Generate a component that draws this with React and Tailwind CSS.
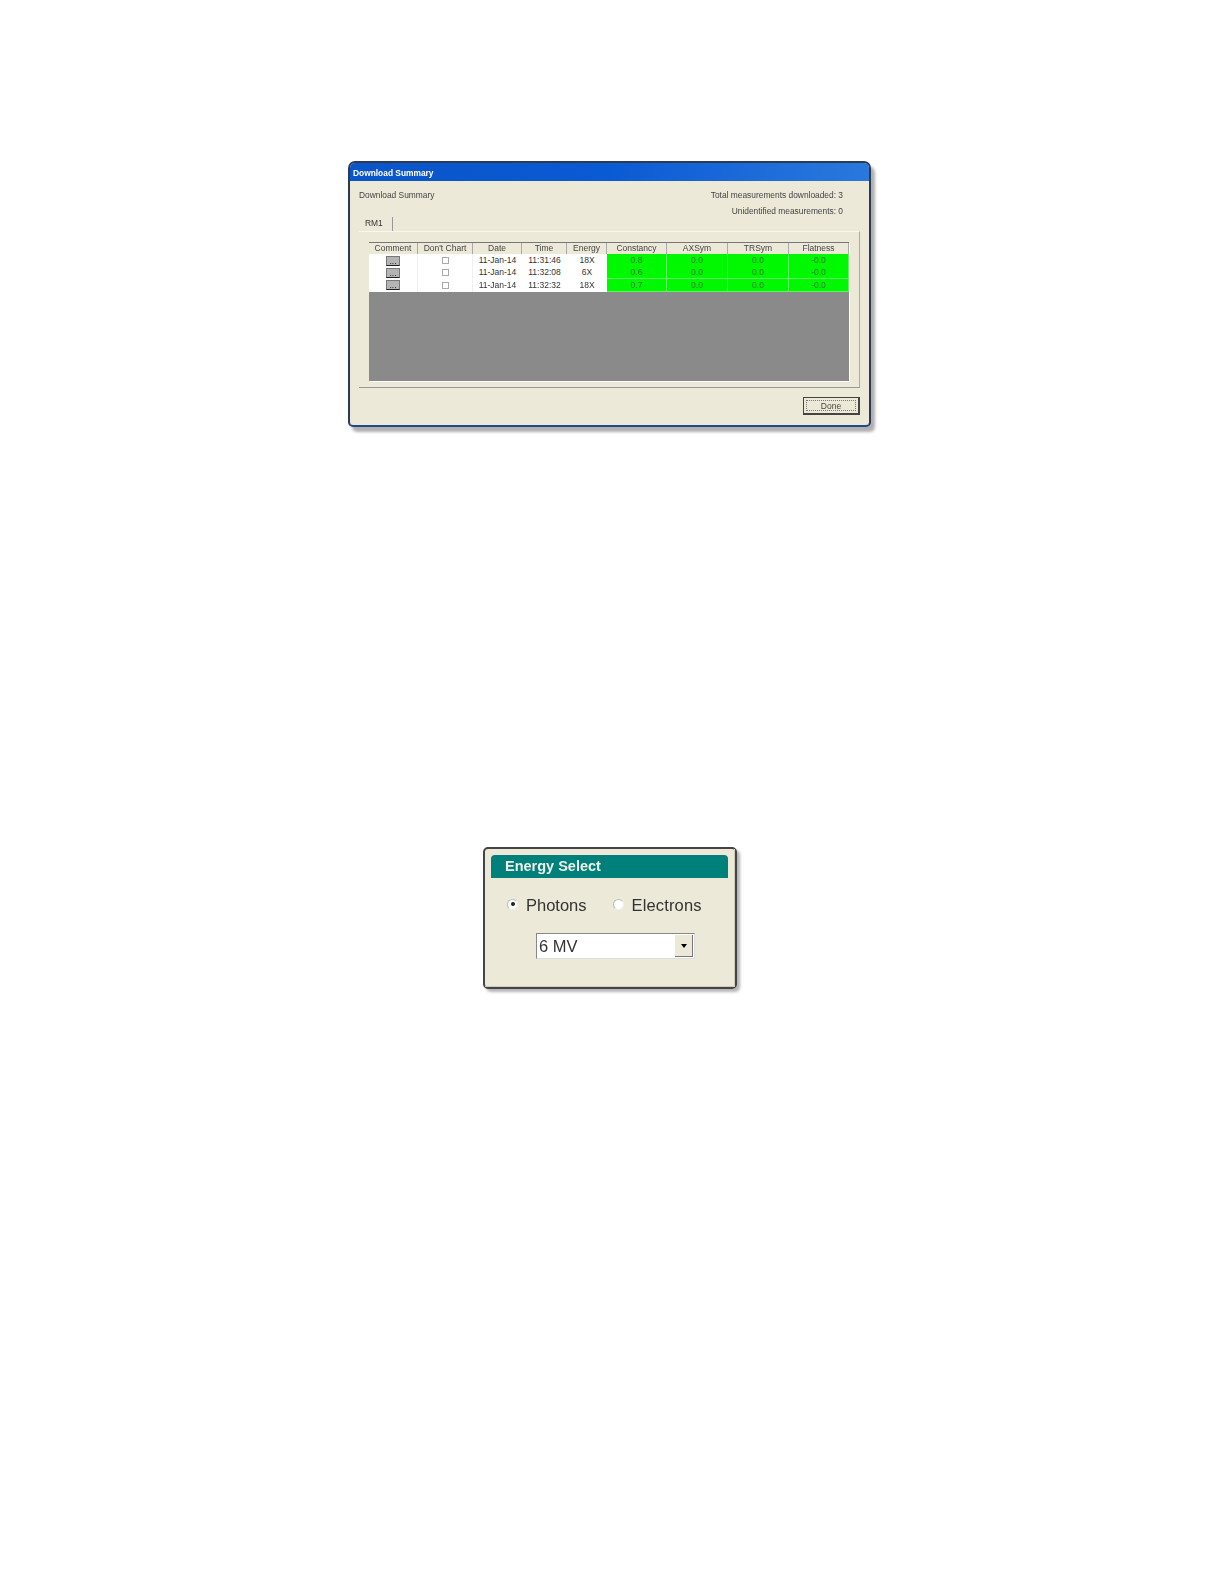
import React from 'react';

const cols = 'grid grid-cols-[49px_55px_49px_45px_40px_60px_61px_61px_60px]';

const headers = ['Comment', "Don't Chart", 'Date', 'Time', 'Energy', 'Constancy', 'AXSym', 'TRSym', 'Flatness'];

const rows = [
  { time: '11:31:46', energy: '18X', constancy: '0.8' },
  { time: '11:32:08', energy: '6X', constancy: '0.6' },
  { time: '11:32:32', energy: '18X', constancy: '0.7' },
];

const Row = ({ row }) => (
  <div className={`${cols} h-[12.33px] text-[8.5px] leading-3 text-[#333]`}>
    <div className="flex items-center justify-center border-r border-[#f0f0f0] bg-white">
      <div className="h-[10px] w-[14px] overflow-hidden border border-[#777] border-b-[#222] bg-[#b4b4b4] text-center text-[8.5px] leading-[9px] text-[#222]">...</div>
    </div>
    <div className="flex items-center justify-center border-r border-[#f0f0f0] bg-white">
      <div className="h-[7px] w-[7px] border border-[#aaa] bg-white" />
    </div>
    <div className="bg-white text-center">11-Jan-14</div>
    <div className="bg-white text-center">{row.time}</div>
    <div className="bg-white text-center">{row.energy}</div>
    {[row.constancy, '0.0', '0.0', '-0.0'].map((v, i) => (
      <div key={i} className="border-b border-r border-[#66f066] bg-[#00f800] text-center text-[#2a7a2a]">{v}</div>
    ))}
  </div>
);

const DownloadSummary = () => (
  <div className="ml-[348px] h-[266px] w-[523px] overflow-hidden rounded-t-[7px] rounded-b-[5px] border-2 border-[#2b3a55] border-b-[#1d4a8c] bg-[#ece9d8] shadow-[4px_5px_3px_#b0b0b0] blur-[0.3px]">
    <div className="h-[18px] bg-gradient-to-r from-[#0a55c8] via-[#0a5ad4] to-[#2a78dc] pl-[3px] text-[8.4px] font-bold leading-[20px] text-white">
      Download Summary
    </div>
    <div className="px-[9px] pt-2 text-[8.4px] text-[#444]">
      <div className="flex justify-between pr-[17px] leading-3">
        <span>Download Summary</span>
        <span>Total measurements downloaded: 3</span>
      </div>
      <div className="mt-1 pr-[17px] text-right leading-3">Unidentified measurements: 0</div>
      <div className="h-[14px] w-[34px] border-r border-[#999] pl-[6px] leading-3 text-[#333]">RM1</div>
      <div className="h-[157px] border border-l-0 border-t-[#f8f6ee] border-r-[#aaa] border-b-[#999] pl-[10px] pt-[10px]">
        <div className="h-[139px] w-[480px] border-t border-[#777] shadow-[1px_1px_0_#fff]">
          <div className={`${cols} h-[11px] bg-[#ece9d8] text-[8.5px] leading-[11px] text-[#444]`}>
            {headers.map((h) => (
              <div key={h} className="border-r border-b border-[#aaa] text-center">{h}</div>
            ))}
          </div>
          {rows.map((row) => <Row key={row.time} row={row} />)}
          <div className="h-[90px] border-t border-[#666] bg-[#8a8a8a]" />
        </div>
      </div>
      <div className="mt-[9px] flex justify-end">
        <button className="h-[18px] w-[57px] border border-[#444] border-b-2 border-r-2 p-[2px] text-[8.5px] text-[#444]">
          <span className="block h-full border border-dotted border-[#777] leading-[11px]">Done</span>
        </button>
      </div>
    </div>
  </div>
);

const EnergySelect = () => (
  <div className="ml-[483px] mt-[420px] h-[142px] w-[254px] rounded-[5px] border-2 border-[#444] bg-[#ece9d8] shadow-[3px_3px_3px_#b5b5b5] blur-[0.3px]">
    <div className="h-full border-r border-b border-[#cfccbb] pl-[6px] pt-[6px]">
      <div className="h-[23px] w-[237px] rounded-t-[4px] bg-[#00807a] pl-[14px] text-[14.5px] font-bold leading-[22px] text-[#f0f0e8]">
        Energy Select
      </div>
      <div className="mt-[17px] flex items-center pl-4 text-[16.5px] leading-5 text-[#333]">
        <div className="flex h-[11px] w-[11px] -translate-y-px items-center justify-center rounded-full border border-[#bbb] border-r-[#eee] border-b-[#eee] bg-white">
          <div className="h-1 w-1 rounded-full bg-[#222]" />
        </div>
        <span className="ml-2">Photons</span>
        <div className="ml-[26px] h-[11px] w-[11px] -translate-y-px rounded-full border border-[#bbb] border-r-[#eee] border-b-[#eee] bg-white" />
        <span className="ml-2 tracking-[0.15px]">Electrons</span>
      </div>
      <div className="ml-[45px] mt-[18px] flex h-[26px] w-[159px] items-center justify-between border border-[#888] border-r-[#ddd] border-b-[#ddd] bg-white pl-[2px] pr-[1px] text-[16.5px] text-[#333]">
        <span>6 MV</span>
        <div className="flex h-[22px] w-[18px] items-center justify-center border-r border-b border-[#777] bg-[#ece9d8]">
          <div className="h-0 w-0 border-x-[3.5px] border-t-[4px] border-x-transparent border-t-black" />
        </div>
      </div>
    </div>
  </div>
);

const App = () => (
  <div className="h-[1584px] w-[1224px] bg-white pt-[161px] font-['Liberation_Sans',sans-serif]">
    <DownloadSummary />
    <EnergySelect />
  </div>
);

export default App;
